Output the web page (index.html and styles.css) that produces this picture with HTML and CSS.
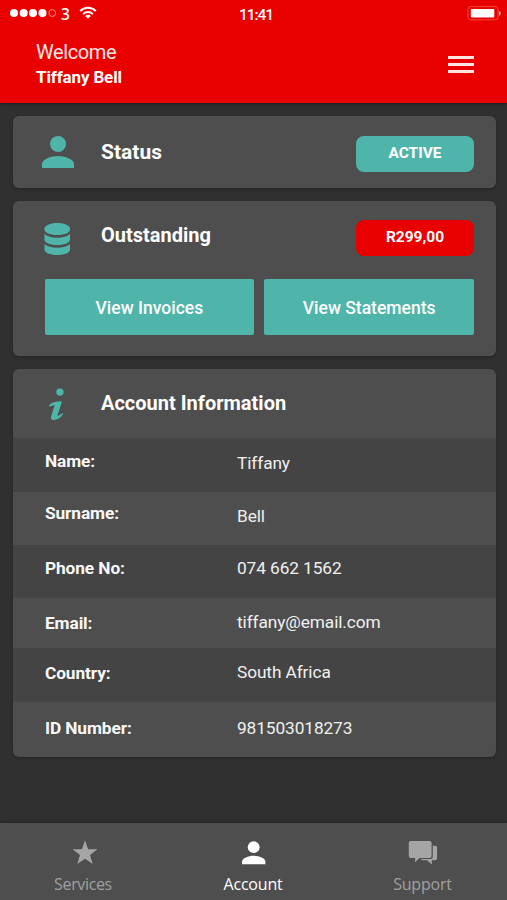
FILE: index.html
```html
<!DOCTYPE html>
<html lang="en">
<head>
<meta charset="utf-8">
<title>Account</title>
<link rel="stylesheet" href="styles.css">
</head>
<body>
<header class="header">
  <div class="statusbar">
    <div class="carrier">
      <svg class="signal" width="48" height="10" viewBox="0 0 48 10" fill="#fff"><circle cx="4" cy="5" r="4"/><circle cx="13.7" cy="5" r="4"/><circle cx="23" cy="5" r="4"/><circle cx="32.5" cy="5" r="4"/><circle cx="42.3" cy="5" r="3.4" fill="none" stroke="#ff8a80" stroke-width="1"/></svg>
      <span class="network">3</span>
      <svg class="wifi" width="18" height="13" viewBox="0 0 18 13" fill="none" stroke="#fff" stroke-width="2"><path d="M1.2 5.1C5.5.6 12.5.6 16.8 5.1M4.1 8.1c2.8-2.9 7-2.9 9.8 0"/><path d="M9 12.5 6.1 9.9c1.7-1.5 4.1-1.5 5.8 0z" fill="#fff" stroke="none"/></svg>
    </div>
    <div class="clock">11:41</div>
    <svg class="battery" width="35" height="15" viewBox="0 0 35 15"><rect x="2" y=".6" width="30" height="13.200" rx="2.500" fill="none" stroke="#f5463c"/><rect x="4.800" y="3" width="23.500" height="8.500" rx="1" fill="#fff"/><path d="M33.300 5.300c1.700.5 1.700 3.900 0 4.400z" fill="#fff"/></svg>
  </div>
  <div class="greeting">
    <div class="user">
      <div class="welcome">Welcome</div>
      <div class="username">Tiffany Bell</div>
    </div>
    <div class="menu"><i></i><i></i><i></i></div>
  </div>
</header>

<main class="content">
  <section class="card status">
    <svg class="icon" width="32" height="32" viewBox="0 0 32 32" fill="#4fb5aa"><circle cx="16" cy="8" r="8"/><path d="M0 32v-4c0-4.500 9-8 16-8s16 3.500 16 8v4z"/></svg>
    <h2 class="title">Status</h2>
    <span class="pill active">ACTIVE</span>
  </section>

  <section class="card outstanding">
    <div class="summary">
      <svg class="icon" width="32" height="32" viewBox="0 0 32 32" fill="#4fb5aa"><path d="M2.500 5.500C2.500 2.500 8 0 15.300 0S28 2.500 28 5.500v1C28 9.500 23 12 15.300 12S2.500 9.500 2.500 6.500z"/><path d="M2.500 11c3 2.500 7 3.700 12.800 3.700S25 13.500 28 11v5.500c0 3-5 5.500-12.700 5.500S2.500 19.500 2.500 16.500z"/><path d="M2.500 21c3 2.500 7 3.700 12.800 3.700S25 23.500 28 21v5.500c0 3-5 5.500-12.700 5.500S2.500 29.500 2.500 26.500z"/></svg>
      <h2 class="title">Outstanding</h2>
      <span class="pill due">R299,00</span>
    </div>
    <div class="actions">
      <a class="button">View Invoices</a>
      <a class="button">View Statements</a>
    </div>
  </section>

  <section class="card info">
    <div class="infohead">
      <svg class="icon" width="32" height="32" viewBox="0 0 32 32" fill="#4fb5aa"><circle cx="17.900" cy="4.100" r="3.700"/><path d="M7.300 17.300C9 14.600 12.500 13.500 18 13.200c1.400-.1 1.900.5 1.500 1.800l-3.900 12c-.3 1 .4 1 1.200.5l3.200-2.100c.7-.4 1.300.2.9.9C18.700 30 15.300 32 11.700 32c-2.500 0-3.200-1.300-2.600-3.400l3.300-10.300c.3-1-.2-1.300-1-1.100-1.100.3-1.900.8-2.900 1.400-1 .5-1.700-.4-1.200-1.300z"/></svg>
      <h2 class="title">Account Information</h2>
    </div>
    <dl class="details">
      <div class="row name"><dt>Name:</dt><dd>Tiffany</dd></div>
      <div class="row surname"><dt>Surname:</dt><dd>Bell</dd></div>
      <div class="row phone"><dt>Phone No:</dt><dd>074 662 1562</dd></div>
      <div class="row email"><dt>Email:</dt><dd>tiffany@email.com</dd></div>
      <div class="row country"><dt>Country:</dt><dd>South Africa</dd></div>
      <div class="row idnumber"><dt>ID Number:</dt><dd>981503018273</dd></div>
    </dl>
  </section>
</main>

<nav class="tabs">
  <a class="tab services"><svg width="26" height="26" viewBox="0 0 26 26" fill="#a5a5a5"><path d="M13 .2l3.100 9.100h9.400l-7.500 5.600 2.800 9.200L13 18.700l-7.800 5.400L8 14.900.5 9.300h9.400z"/></svg><span>Services</span></a>
  <a class="tab current"><svg width="26" height="26" viewBox="0 0 26 26" fill="#fff"><circle cx="12.700" cy="7.200" r="5.900"/><path d="M1 24.300v-2.700c0-3.500 6.500-5.900 11.700-5.900s11.700 2.400 11.700 5.900v2.700z"/></svg><span>Account</span></a>
  <a class="tab support"><svg width="30" height="26" viewBox="0 0 30 26" fill="#a5a5a5"><path d="M2.800 1H21.600q2 0 2 2v13q0 2-2 2H11.600l-4.500 4.300V18H2.800q-2 0-2-2V3q0-2 2-2z"/><path d="M24.800 5.800h2.300q2 0 2 2v10.400q0 2-2 2h-3.300V24.500L19.100 20.200H14.600q-1.500 0-2-1.100h10.200q2 0 2-2z"/></svg><span>Support</span></a>
</nav>
</body>
</html>
```

FILE: styles.css
```css
* { box-sizing: border-box; }
body {
  margin: 0;
  height: 900px;
  display: flex;
  flex-direction: column;
  overflow: hidden;
  background: #303030;
  color: #fff;
  font-family: Roboto, "Liberation Sans", sans-serif;
}
.header {
  height: 102.500px;
  flex: none;
  background: #e80000;
  box-shadow: 0 1px 4px rgba(0, 0, 0, .5);
}
.statusbar {
  height: 28px;
  display: grid;
  grid-template-columns: 1fr auto 1fr;
  padding: 0 6px 0 10px;
}
.carrier { display: flex; align-items: flex-start; }
.signal { margin-top: 8px; }
.network {
  width: 10px;
  margin: 4px 0 0 3px;
  font: 600 15.500px/20px "Open Sans", sans-serif;
}
.wifi { margin: 6px 0 0 7.500px; }
.clock { font-size: 15.500px; line-height: 20px; font-weight: 500; letter-spacing: -1.100px; padding-top: 5px; margin-left: 1px; }
.battery { justify-self: end; margin-top: 6px; }
.greeting { display: flex; justify-content: space-between; padding: 12px 33px 0 36px; }
.welcome { font-size: 20px; line-height: 24px; letter-spacing: -.4px; color: #ffe8e5; }
.username { font-size: 17px; line-height: 22px; letter-spacing: -.15px; font-weight: 700; margin-top: 2px; }
.menu { width: 26px; display: flex; flex-direction: column; gap: 4px; padding-top: 16px; }
.menu i { height: 3px; background: #ffe4e1; }

.content { flex: 1; display: flex; flex-direction: column; gap: 13px; padding: 13px 11px 0 12.500px; }
.card {
  flex: none;
  background: #4e4e4e;
  border-radius: 6px;
  box-shadow: 0 1px 3px rgba(0, 0, 0, .25);
}
.icon { flex: none; margin-left: 29.500px; }
.title { margin: 0 auto 0 27px; font-size: 20px; line-height: 24px; font-weight: 700; }
.pill {
  width: 118px;
  height: 36px;
  margin-right: 22px;
  border-radius: 8px;
  text-align: center;
  font-size: 15.500px;
  font-weight: 700;
  line-height: 34px;
}
.active { background: #4fb5aa; }
.due { background: #e80000; }
.status { height: 72.500px; display: flex; align-items: flex-start; padding-top: 20px; }
.status .title { margin-top: 4px; font-size: 21px; }
.outstanding { height: 155px; padding-top: 18.500px; }
.summary { display: flex; align-items: flex-start; height: 59.500px; }
.summary .icon { margin-top: 3px; }
.summary .title { margin-top: 3px; }
.actions { display: grid; grid-template-columns: 1fr 1fr; gap: 10px; padding: 0 22px 0 32px; }
.button {
  height: 56px;
  border-radius: 2px;
  background: #4fb5aa;
  text-align: center;
  font-size: 17.500px;
  font-weight: 500;
  line-height: 58px;
}
.info { overflow: hidden; height: 387.500px; }
.infohead { display: flex; height: 69px; padding-top: 19px; }
.infohead .title { margin-top: 3px; }
.details { margin: 0; }
.row { display: grid; grid-template-columns: 192px 1fr; padding-left: 32.500px; font-size: 17.300px; letter-spacing: -.1px; line-height: 24px; }
.row:nth-child(odd) { background: #444; }
.row dt { font-weight: 700; color: #f8f8f8; }
.row dd { margin: 0; color: #f0f0f0; }
.name { height: 53.500px; padding-top: 11px; }
.name dd { padding-top: 2px; }
.surname { height: 53px; padding-top: 9px; }
.surname dd { padding-top: 3px; }
.phone { height: 53px; padding-top: 11px; }
.email { height: 50px; padding-top: 12px; }
.email dt { padding-top: 1px; }
.country { height: 54px; padding-top: 12px; }
.country dt { padding-top: 1px; }
.idnumber { height: 55px; padding-top: 14px; }

.tabs {
  flex: none;
  height: 77px;
  display: grid;
  grid-template-columns: repeat(3, 1fr);
  background: #4e4e4e;
  box-shadow: 0 -1px 2px rgba(0, 0, 0, .3);
}
.tab {
  display: flex;
  flex-direction: column;
  align-items: center;
  padding-top: 17px;
  color: #a0a0a0;
  font: 16px/22px "Open Sans", sans-serif;
  letter-spacing: -.2px;
}
.tab span { margin-top: 7px; }
.services span { margin-right: 3px; letter-spacing: -.35px; }
.current span { margin-right: 1px; }
.current { color: #fff; }
```
